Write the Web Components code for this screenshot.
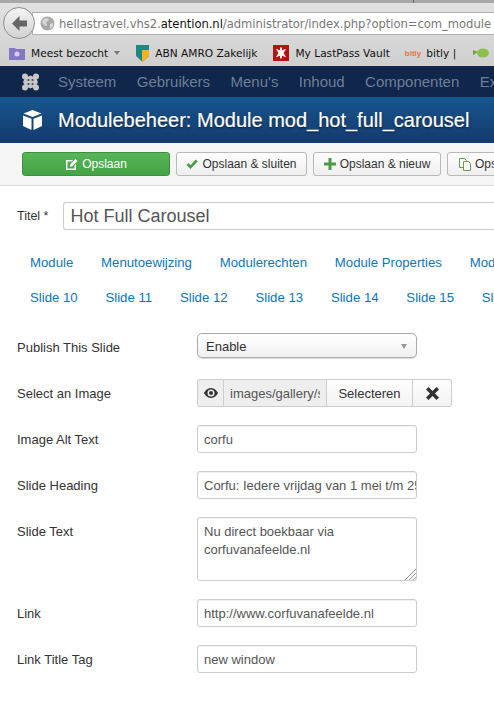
<!DOCTYPE html>
<html>
<head>
<meta charset="utf-8">
<title>Modulebeheer</title>
<style>
html, body { margin: 0; padding: 0; background: #fff; }
body { width: 494px; height: 701px; overflow: hidden; font-family: "Liberation Sans", Arial, sans-serif; }
</style>
</head>
<body>
<browser-chrome></browser-chrome>
<admin-nav></admin-nav>
<title-bar>Modulebeheer: Module mod_hot_full_carousel</title-bar>
<action-toolbar></action-toolbar>
<module-form></module-form>

<script>
class BrowserChrome extends HTMLElement {
    constructor() {
        super();
        this.shadowDOM = this.attachShadow({mode: "open"});
        this.shadowDOM.innerHTML = `
        <style>
        :host { display: block; height: 66px; background: linear-gradient(#e2e2e2, #cfcfcf); overflow: hidden; font-family: "DejaVu Sans", sans-serif; }
        .tabs { height: 3px; background: linear-gradient(to right, #a8a8a8 413px, #666 413px, #666 414px, #a8a8a8 414px); }
        .url-row { height: 37px; display: flex; align-items: flex-start; padding-left: 3px; box-sizing: border-box; }
        .back { width: 32px; height: 32px; border-radius: 50%; border: 1px solid #8f8f8f; background: linear-gradient(#f4f4f4, #d2d2d2); display: flex; align-items: center; justify-content: center; flex: none; z-index: 1; box-sizing: border-box; margin-top: 4px; }
        .url { flex: 1; height: 23px; margin: 9px 0 0 -3px; padding-left: 7px; background: #fff; border: 1px solid #b0b0b0; border-right: 0; display: flex; align-items: center; gap: 4px; font-size: 11.6px; letter-spacing: -.05px; color: #777; white-space: nowrap; overflow: hidden; box-sizing: border-box; }
        .url b { font-weight: normal; color: #111; }
        .marks { height: 26px; padding-left: 9px; box-sizing: border-box; display: flex; align-items: center; font-size: 10.6px; color: #111; white-space: nowrap; overflow: hidden; }
        .mark { display: flex; align-items: center; gap: 6px; flex: none; }
        .caret { width: 0; height: 0; border: 3.5px solid transparent; border-top: 4px solid #777; border-bottom: 0; }
        .bitly { font-size: 8px; font-weight: bold; color: #e8743b; font-family: "Liberation Sans", sans-serif; }
        </style>
        <div class="tabs"></div>
        <div class="url-row">
            <div class="back">
                <svg width="15" height="15" viewBox="0 0 15 15"><path d="M7.500 0 0 7.500 7.500 15V10.500H15V4.500H7.500z" fill="#666"/></svg>
            </div>
            <div class="url">
                <svg width="15" height="15" viewBox="0 0 15 15" style="flex:none"><circle cx="7.500" cy="7.500" r="7" fill="#a9a9a9"/><path d="M4 3c2-1 4-1 5 0L8 5 6 6 7 9 5 10 2 6zM10 8l3-1 0 3-3 3z" fill="#d8d8d8"/></svg>
                <span>hellastravel.vhs2.<b>atention.nl</b>/administrator/index.php?option=com_module</span>
            </div>
        </div>
        <div class="marks">
            <div class="mark">
                <svg width="16" height="14" viewBox="0 0 16 14"><path d="M0 2h6l1 1h9v11H0z" fill="#8577c4"/><circle cx="8" cy="8" r="2.500" fill="#d5cff0"/></svg>
                <span>Meest bezocht</span><span class="caret"></span>
            </div>
            <div class="mark" style="margin-left:16px">
                <svg width="13" height="17" viewBox="0 0 13 17"><path d="M0 0h13v11l-6.500 6L0 11z" fill="#1c8a82"/><path d="M6 5h7v6l-6.500 6H6z" fill="#f5b21c"/></svg>
                <span>ABN AMRO Zakelijk</span>
            </div>
            <div class="mark" style="margin-left:16px">
                <svg width="16" height="16" viewBox="0 0 16 16"><rect width="16" height="16" fill="#b5120f"/><path d="M8 2.500 9 6l3.300-1.500L10 8l2.300 3.500L9 10l-1 3.500L7 10l-3.300 1.500L6 8 3.700 4.500 7 6z" fill="#fff" stroke="#fff"/></svg>
                <span>My LastPass Vault</span>
            </div>
            <div class="mark" style="margin-left:15px;gap:5px">
                <span class="bitly">bitly</span><span>bitly |</span>
            </div>
            <div class="mark" style="margin-left:17px">
                <svg width="17" height="10" viewBox="0 0 17 10"><ellipse cx="10" cy="5" rx="6" ry="4.500" fill="#8cc04b"/><path d="M0 2l5 2-5 3z" fill="#6fa23a"/></svg>
            </div>
        </div>
        `;
    }
}
customElements.define("browser-chrome", BrowserChrome);

class AdminNav extends HTMLElement {
    constructor() {
        super();
        this.shadowDOM = this.attachShadow({mode: "open"});
        this.shadowDOM.innerHTML = `
        <style>
        :host { display: flex; align-items: center; height: 31px; background: linear-gradient(#11264b, #10264a); overflow: hidden; white-space: nowrap; padding-left: 22px; font: 15px "Liberation Sans", Arial, sans-serif; color: #6d7f97; }
        svg { flex: none; margin-right: 19px; }
        span { margin-right: 20.4px; flex: none; }
        </style>
        <svg width="17" height="18" viewBox="0 0 17 18"><g fill="#c9c6c6"><circle cx="3" cy="3.500" r="3"/><circle cx="14" cy="3.500" r="3"/><circle cx="3" cy="14.500" r="3"/><circle cx="14" cy="14.500" r="3"/><path d="M3 5 8.500 2.500 14 5 16 9 14 13 8.500 15.500 3 13 1 9z"/></g><g fill="#3b4c6a"><circle cx="6.500" cy="7" r="1.100"/><circle cx="10.500" cy="7" r="1.100"/><circle cx="6.500" cy="11" r="1.100"/><circle cx="10.500" cy="11" r="1.100"/></g></svg>
        <span>Systeem</span><span>Gebruikers</span><span>Menu's</span><span>Inhoud</span><span>Componenten</span><span>Ex</span>
        `;
    }
}
customElements.define("admin-nav", AdminNav);

class TitleBar extends HTMLElement {
    constructor() {
        super();
        this.shadowDOM = this.attachShadow({mode: "open"});
        this.shadowDOM.innerHTML = `
        <style>
        :host { display: flex; align-items: center; height: 46px; padding-left: 23px; background: linear-gradient(#17568e, #143a6c); color: #fff; font: 20px "Liberation Sans", Arial, sans-serif; -webkit-text-stroke: 0.2px #fff; white-space: nowrap; overflow: hidden; text-shadow: 0 1px 2px rgba(0,0,0,.6); }
        svg { flex: none; margin-right: 16px; }
        </style>
        <svg width="19" height="20" viewBox="0 0 19 20"><path d="M9.500 0 18.500 3.500 9.500 7 .5 3.500z" fill="#fff"/><path d="M0 5.500 8.500 8.800V20L0 16zM19 5.500 10.500 8.800V20L19 16z" fill="#fff"/></svg>
        <slot></slot>
        `;
    }
}
customElements.define("title-bar", TitleBar);

class TbButton extends HTMLElement {
    constructor() {
        super();
        this.shadowDOM = this.attachShadow({mode: "open"});
        this.shadowDOM.innerHTML = `
        <style>
        :host { display: flex; align-items: center; justify-content: center; flex: none; gap: 4px; height: 24px; box-sizing: border-box; padding: 0 9px; border: 1px solid #b9b9b9; border-radius: 3px; background: linear-gradient(#fff, #eee); color: #333; font-size: 12px; white-space: nowrap; }
        :host([primary]) { background: linear-gradient(#58b558, #44a344); border-color: #3f8f3f; color: #fff; }
        </style>
        <slot name="icon"></slot><slot></slot>
        `;
    }
}
customElements.define("tb-button", TbButton);

class ActionToolbar extends HTMLElement {
    constructor() {
        super();
        this.shadowDOM = this.attachShadow({mode: "open"});
        this.shadowDOM.innerHTML = `
        <style>
        :host { display: flex; gap: 6px; height: 43px; box-sizing: border-box; padding: 9px 0 0 22px; background: #f5f5f5; border-bottom: 1px solid #ddd; overflow: hidden; font-family: "Liberation Sans", Arial, sans-serif; }
        </style>
        <tb-button primary style="width:148px"><svg slot="icon" width="13" height="13" viewBox="0 0 13 13"><path d="M1 2h7L6.500 3.500H2.500v7h7V7.500L11 6v6H1z" fill="#fff"/><path d="M5 6.500 10.500 1 12.500 3 7 8.500H5z" fill="#fff"/></svg>Opslaan</tb-button>
        <tb-button style="width:131px"><svg slot="icon" width="12" height="11" viewBox="0 0 12 11"><path d="M0.500 6 2.500 4 4.500 6.200 9.700 .5 11.700 2.400 4.500 10z" fill="#4a9a4a"/></svg>Opslaan &amp; sluiten</tb-button>
        <tb-button style="width:128px"><svg slot="icon" width="12" height="12" viewBox="0 0 12 12"><path d="M4.500 0h3v4.500H12v3H7.500V12h-3V7.500H0v-3h4.500z" fill="#4a9a4a"/></svg>Opslaan &amp; nieuw</tb-button>
        <tb-button style="width:130px;justify-content:flex-start;padding-left:10px"><svg slot="icon" width="13" height="13" viewBox="0 0 13 13"><path d="M1.500.5h5l2 2v7h-7z" fill="#fff" stroke="#6b9a4f"/><path d="M5.500 3.500h5l2 2v7h-7z" fill="#fff" stroke="#6b9a4f"/></svg>Ops</tb-button>
        `;
    }
}
customElements.define("action-toolbar", ActionToolbar);

class TabRow extends HTMLElement {
    constructor() {
        super();
        this.shadowDOM = this.attachShadow({mode: "open"});
        this.shadowDOM.innerHTML = `
        <style>
        :host { display: flex; gap: 27.8px; height: 35px; align-items: center; white-space: nowrap; overflow: hidden; font-size: 13.2px; color: #0f76b8; }
        </style>
        <slot></slot>
        `;
    }
}
customElements.define("tab-row", TabRow);

class FormRow extends HTMLElement {
    constructor() {
        super();
        this.shadowDOM = this.attachShadow({mode: "open"});
        this.shadowDOM.innerHTML = `
        <style>
        :host { display: grid; grid-template-columns: 180px 1fr; align-items: start; font-size: 13px; color: #333; }
        .label { padding-top: 7px; }
        </style>
        <div class="label"><slot name="label"></slot></div>
        <div><slot></slot></div>
        `;
    }
}
customElements.define("form-row", FormRow);

class ModuleForm extends HTMLElement {
    constructor() {
        super();
        this.shadowDOM = this.attachShadow({mode: "open"});
        this.shadowDOM.innerHTML = `
        <style>
        :host { display: block; font-family: "Liberation Sans", Arial, sans-serif; color: #333; }
        .title { display: flex; align-items: center; padding: 16px 0 0 17px; font-size: 12.5px; gap: 14px; white-space: nowrap; }
        .title-input { flex: 1; height: 28px; box-sizing: border-box; border: 1px solid #ccc; border-right: 0; border-radius: 3px 0 0 3px; padding-left: 7px; display: flex; align-items: center; font-size: 18px; color: #555; }
        .tabs { padding: 15px 0 0 30px; }
        .tabs span { flex: none; }
        .rows { padding: 18px 0 0 17px; display: flex; flex-direction: column; }
        .input { width: 220px; height: 28px; box-sizing: border-box; border: 1px solid #ccc; border-radius: 3px; padding: 0 6px; display: flex; align-items: center; white-space: nowrap; overflow: hidden; color: #555; box-shadow: inset 0 1px 1px rgba(0,0,0,.06); }
        .select { height: 25px; border-color: #aaa; border-radius: 5px; color: #333; background: linear-gradient(#fff, #f0f0f0); justify-content: space-between; padding: 2px 9px 0 8px; box-shadow: 0 1px 1px rgba(0,0,0,.15); }
        .select i { width: 0; height: 0; border: 3.500px solid transparent; border-top: 5px solid #999; border-bottom: 0; }
        .area { height: 64px; align-items: flex-start; padding-top: 5px; line-height: 18px; white-space: normal; position: relative; }
        .grip { position: absolute; right: 0; bottom: 0; }
        .media { display: flex; height: 28px; color: #555; }
        .media > div { box-sizing: border-box; display: flex; align-items: center; border: 1px solid #ccc; border-left: 0; white-space: nowrap; }
        .media .eye { width: 27px; justify-content: center; border-left: 1px solid #ccc; border-radius: 3px 0 0 3px; background: #eee; }
        .media .path { width: 103px; padding-left: 6px; background: #eee; }
        .media .path span { display: block; width: 90px; overflow: hidden; }
        .media .pick { width: 86px; justify-content: center; color: #333; background: linear-gradient(#fff, #f2f2f2); }
        .media .clear { width: 39px; justify-content: center; border-radius: 0 3px 3px 0; background: linear-gradient(#fff, #f2f2f2); }
        </style>
        <div class="title"><span>Titel *</span><div class="title-input">Hot Full Carousel</div></div>
        <div class="tabs">
            <tab-row><span>Module</span><span>Menutoewijzing</span><span>Modulerechten</span><span>Module Properties</span><span>Module Slides</span></tab-row>
            <tab-row><span>Slide 10</span><span>Slide 11</span><span>Slide 12</span><span>Slide 13</span><span>Slide 14</span><span>Slide 15</span><span>Slide 16</span></tab-row>
        </div>
        <div class="rows">
            <form-row style="height:46px"><span slot="label">Publish This Slide</span><div class="input select"><span>Enable</span><i></i></div></form-row>
            <form-row style="height:46px"><span slot="label">Select an Image</span>
                <div class="media">
                    <div class="eye"><svg width="14" height="10" viewBox="0 0 14 10"><path d="M7 0C3.500 0 1 3 0 5c1 2 3.500 5 7 5s6-3 7-5c-1-2-3.500-5-7-5zm0 1.500a3.500 3.500 0 1 1 0 7 3.500 3.500 0 0 1 0-7z" fill="#333"/><circle cx="7" cy="5" r="2" fill="#333"/></svg></div>
                    <div class="path"><span>images/gallery/s</span></div>
                    <div class="pick">Selecteren</div>
                    <div class="clear"><svg width="13" height="13" viewBox="0 0 13 13"><path d="M2.500 0 6.500 4 10.500 0 13 2.500 9 6.500 13 10.500 10.500 13 6.500 9 2.500 13 0 10.500 4 6.500 0 2.500z" fill="#333"/></svg></div>
                </div>
            </form-row>
            <form-row style="height:46px"><span slot="label">Image Alt Text</span><div class="input">corfu</div></form-row>
            <form-row style="height:46px"><span slot="label">Slide Heading</span><div class="input">Corfu: Iedere vrijdag van 1 mei t/m 25</div></form-row>
            <form-row style="height:82px"><span slot="label">Slide Text</span><div class="input area"><span>Nu direct boekbaar via corfuvanafeelde.nl</span><svg class="grip" width="12" height="12" viewBox="0 0 12 12"><path d="M12 1 1 12M12 5 5 12M12 9 9 12" stroke="#999" fill="none"/></svg></div></form-row>
            <form-row style="height:46px"><span slot="label">Link</span><div class="input">http://www.corfuvanafeelde.nl</div></form-row>
            <form-row style="height:46px"><span slot="label">Link Title Tag</span><div class="input">new window</div></form-row>
        </div>
        `;
    }
}
customElements.define("module-form", ModuleForm);
</script>
</body>
</html>
